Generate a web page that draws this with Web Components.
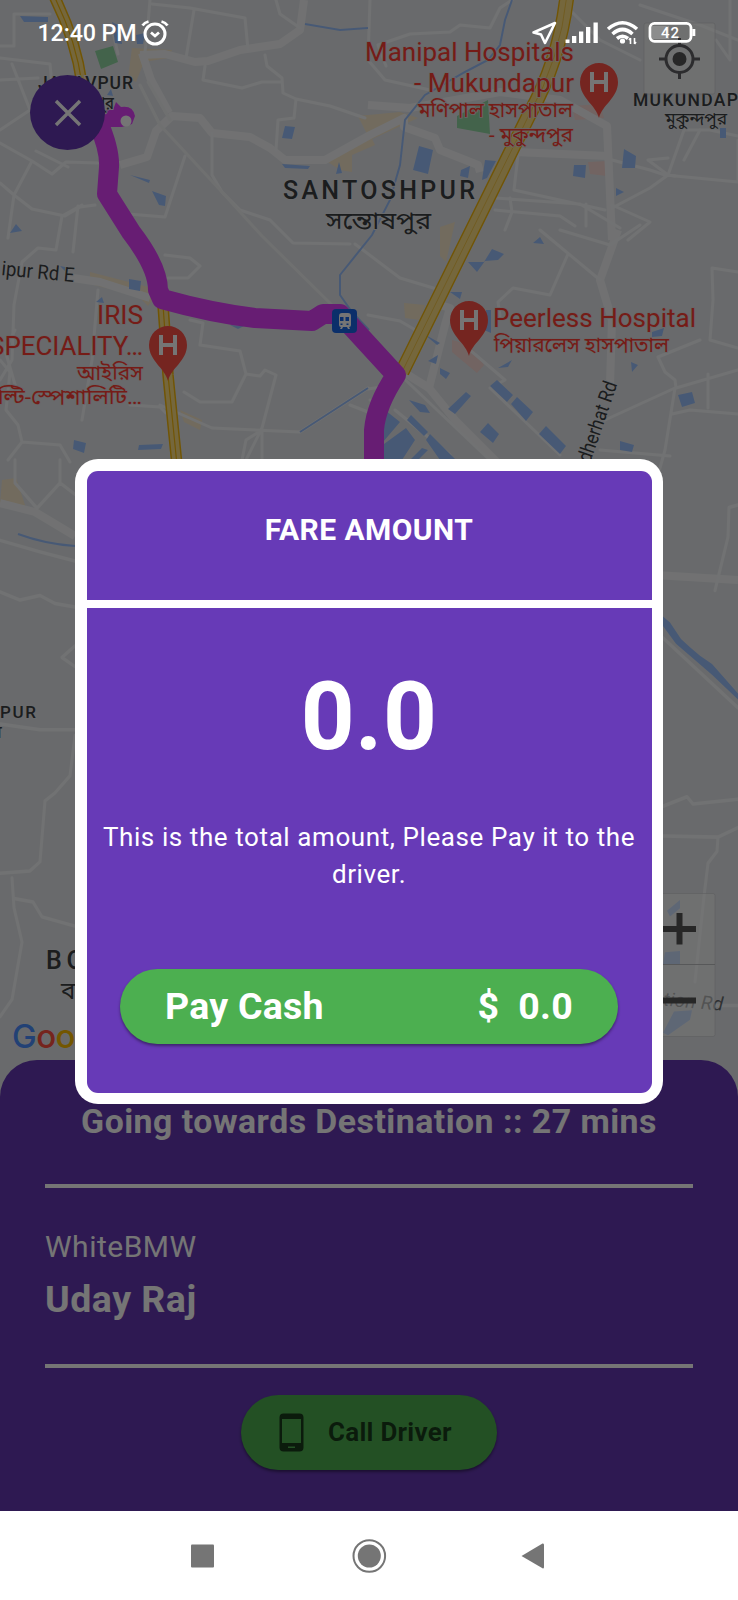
<!DOCTYPE html>
<html lang="en">
<head>
<meta charset="utf-8">
<title>Ride fare</title>
<style>
html,body{margin:0;padding:0}
body{width:738px;height:1600px;overflow:hidden;font-family:Roboto,"Noto Sans",sans-serif;background:#fff}
</style>
</head>
<body>
<ride-screen></ride-screen>
<script>
const define=(name,html)=>customElements.define(name,class extends HTMLElement{
  constructor(){super();this.attachShadow({mode:'open'}).innerHTML=html;}
});

define('city-map',`
<style>
:host{display:block;width:738px;height:1110px;overflow:hidden}
svg{display:block}
text{font-family:Roboto,"Noto Sans Bengali","Noto Sans",sans-serif}
.r{fill:none;stroke:#f7f8fa;stroke-width:3;stroke-linejoin:round;stroke-linecap:round}
.m{fill:none;stroke:#f6f7f9;stroke-width:8;stroke-linejoin:round}
.w{fill:#9cc2ff}
.wl{fill:none;stroke:#9cc2ff;stroke-width:2}
.hl{fill:#ff3d33;stroke:#e3dfe1;stroke-width:1.6;paint-order:stroke;font-weight:400}
.pl{fill:#3c4043;stroke:#e8eaed;stroke-width:2;paint-order:stroke;font-weight:500}
</style>
<svg width="738" height="1110" viewBox="0 0 738 1110">
<defs><g id="pin"><path d="M0 36C-3 23-19 16-19 0A19 19 0 0 1 19 0C19 16 3 23 0 36Z" fill="#ff5247"/><path d="M-7-10V10M7-10V10M-7 0H7" stroke="#fff" stroke-width="4" fill="none"/></g></defs>
<rect width="738" height="1110" fill="#e5e8eb"/>
<g fill="#f8e9cc">
<path d="M132 48L172 50 168 58 144 62 136 82 128 78Z"/><path d="M358 116L400 112 418 118 370 140Z"/><path d="M325 160L370 135 375 145 352 155 352 172 340 170Z"/><path d="M90 272L160 290 148 306 138 296 90 284Z"/><path d="M180 410L202 420 200 430 184 422Z"/><path d="M404 303L425 305 420 320 405 318Z"/><path d="M440 227L455 222 446 262 440 256Z"/><path d="M2 480L16 478 26 508 0 504Z"/>
</g>
<g fill="#f8d9d5"><path d="M572 106L600 104 604 118 575 120Z"/><path d="M588 162L608 161 607 176 590 174Z"/><path d="M452 340L470 345 484 365 477 373 452 352Z"/></g>
<g class="m">
<path d="M142 53L151 80 169 113"/><path d="M140 55L165 54 195 62 208 61 240 50 280 44 300 30 304 0"/><path d="M120 165L147 157 156 131 172 116 200 118 212 133 250 137 270 148 285 160 325 160 370 135 404 118 404 127 435 138 440 150 478 165 480 172"/><path d="M515 152L608 156"/>
<path d="M368 105L410 108 500 92 560 100 607 126 612 240"/><path d="M430 302L450 308 445 325 429 388 455 420 500 465"/><path d="M618 230L600 280 612 320 610 385"/><path d="M0 503L35 512 75 536"/><path d="M655 575L738 580"/><path d="M400 370L429 388"/><path d="M66 277L100 282 150 298"/>
</g>
<g class="r">
<path d="M0 46H14V14H50M0 58L50 64 52 85M0 130L30 110 12 64M0 80L38 78M0 143L32 161 52 174 66 162 98 163M0 183L14 195 8 238M14 195L32 209 65 216 80 207 95 205M32 161L14 195M36 151L68 167M112 28L118 54"/>
<path d="M150 0L148 24 145 52M152 4L190 8 245 18 248 50M194 10L186 58M276 0L280 14 300 28M265 55L267 66 282 78 283 93 296 99 294 118 278 120 276 150M205 66L203 80 242 88 262 82 282 82M296 99L330 106 365 118"/>
<path d="M212 133L212 175 222 192M185 156L165 217 128 214M82 205L62 216 56 250 38 248 22 262 14 305 12 360 0 380M78 206L73 252M222 192L240 210 270 220 293 243 350 244"/>
<path d="M370 0L368 60 385 80 430 90M386 66L378 45 410 34 450 32 460 25 490 28 500 8 512 0M560 0L600 40 640 60M640 5L700 25 738 40M612 160L650 170 665 175 738 182M612 208L650 188 668 175 684 130 710 130 738 136M730 0V60L716 40"/>
<path d="M518 155L514 190 605 210M495 198L580 204 620 228M495 210L560 216 575 226M510 198L512 212 505 230M586 204V226M612 205L650 222 628 240M675 176L668 175 648 160 668 158M684 160L700 130M738 140V180"/>
<path d="M355 244L400 278 440 290M368 315L400 321 424 335M540 230L600 280M568 254L550 295 513 288 498 302 500 316M560 230L610 245 640 225M713 300L710 340 738 348M713 300L712 268 738 272M658 357L700 340M658 357L665 372 675 380 676 388 738 370M605 420L675 388 665 450 658 475M672 414L690 410 738 414M708 374L708 408"/>
<path d="M470 350L505 380 490 388 560 455M368 389L395 385M395 410L450 455M600 450L670 456M385 410L370 400M495 465L395 370"/>
<path d="M165 255L190 258 200 266 188 278 168 278M98 290L92 360 82 420M190 320L203 323 200 345 240 351 246 374 260 376 265 370 276 375 262 428 246 460M246 374L232 402 200 402 184 392M160 405L212 428 300 432 368 388M262 430L262 460M262 430L246 440 242 460M0 360L10 372 6 410 18 425 22 442 60 445 70 462M22 442L8 460M130 405L160 407 166 413M350 405L368 412M18 395L5 350 15 330"/>
<path d="M140 85L160 125 222 192 262 236 335 308" stroke="#f2f3f4"/><path d="M148 82L170 120" stroke="#f2f3f4"/>
<path transform="translate(0 -68.100) scale(1 1.148)" d="M15 460L15 480 37 502 60 480 60 460M60 480L75 490M0 530L40 540 75 548M0 575L20 582 40 578 55 585 75 588M75 622L62 632 75 640M0 690L40 695 75 695M75 700L70 735 55 750 45 757 40 810 30 818 0 820M12 824L14 850 22 880 12 930 0 945M14 842L33 845 42 858 75 866"/>
<path transform="translate(0 -85.600) scale(1 1.186)" d="M663 610L738 669M715 570L728 525 729 500 738 498M663 752L687 744 693 750 738 746M663 777L718 778 738 770M718 778L717 790 708 800 704 828 695 900M715 920H738"/>
</g>
<g class="w">
<path d="M20 16L48 17 48 22 24 22Z"/><path d="M112 22L120 26 122 44 115 43ZM136 35L145 33 143 44 137 44Z"/><path d="M285 126L295 127 292 139 282 138Z"/><path d="M282 164L310 166 308 169 285 168ZM336 174L339 162 342 173Z"/><path d="M130 175L150 180 149 183ZM152 191L166 196 165 206 159 205ZM10 233L16 224 22 231Z"/>
<path d="M419 146L433 150 428 174 413 170ZM461 170L470 166 468 178 460 176ZM485 160L496 161 487 178 482 180Z"/><path d="M624 149L636 156 635 168 622 168ZM574 165L586 165 585 178 573 176ZM616 188L624 192 616 196ZM720 128H726V138H720Z"/>
<path d="M468 262L484 262 492 249 504 254 498 260 485 261 477 272ZM533 243L540 237 544 244ZM450 292L462 292 460 299ZM424 334L440 343 437 345ZM428 361L438 355 436 364ZM498 368L512 360 508 367ZM652 332L664 328 662 336 652 337ZM631 362L638 365 632 372ZM486 310L491 310 491 333 484 330Z"/>
<path d="M497 380L513 395 507 402 490 386ZM517 397L533 412 526 421 511 404ZM466 392L471 396 455 414 448 409ZM440 368L450 373 446 379 440 374ZM488 423L499 434 493 443 480 432ZM546 426L566 446 560 454 539 434ZM678 395L692 392 695 403 682 407ZM620 441L634 445 632 452 620 450ZM409 400L425 405 430 413 420 412Z"/>
<path d="M385 410L400 422 383 442ZM384 444L406 428 415 440 402 460 382 460ZM411 415L428 432 424 436 407 420ZM430 434L456 460H440L426 440ZM410 460L422 448 428 450 418 460Z"/>
<path d="M129 279L141 281 140 291 129 289ZM74 440L86 443 84 453 73 449ZM139 445L163 444 161 449 138 450ZM60 266L70 268 66 272ZM96 302L102 297 104 303ZM107 95L111 89 113 96ZM230 325L244 326 238 329Z"/>
<path transform="translate(0 -85.600) scale(1 1.186)" d="M663 592L670 597 681 611 690 618 700 625 712 632 738 657V662L712 641 690 625 676 615 663 600ZM680 831L667 840 670 845 680 838ZM665 875L680 874V885H663ZM663 943L674 925 692 924 690 932 668 945Z"/>
</g>
<g class="wl"><path d="M512 0L505 20 500 45 488 60 465 72 425 95 405 120 400 165 390 200 372 235 340 275V295L352 312 369 330M300 432L368 388M305 24L340 30 368 28" /><path d="M18 534Q45 544 75 546"/></g>
<path d="M95 51L113 46 118 62 101 69Z" fill="#93d8a4"/><path d="M457 116L488 100 490 134 457 128Z" fill="#93d8a4"/>
<g fill="none"><path d="M54-4Q76 40 82 84M163 305L168 375 177 465" stroke="#f6b90c" stroke-width="11.500"/><path d="M54-4Q76 40 82 84M163 305L168 375 177 465" stroke="#ffe084" stroke-width="8.500"/><path d="M54-4Q76 40 82 84M163 305L168 375 177 465" stroke="#f6b90c" stroke-width="1.200"/>
<path d="M567-5Q560 60 529 115L402 372" stroke="#f6b90c" stroke-width="15"/><path d="M567-5Q560 60 529 115L402 372" stroke="#ffe084" stroke-width="12.200"/><path d="M567-5Q560 60 529 115L402 372" stroke="#f6c94a" stroke-width="1"/></g>
<path d="M98 122Q110 150 109 167L107 194 131 232Q158 267 158 290L162 299Q212 313 255 318L312 321 323 314H340L396 375Q376 405 374 430V475" fill="none" stroke="#e040fb" stroke-width="20" stroke-linejoin="round"/>
<path d="M100 110L113 110 116 102 121 107Q133 105 135 116L132 124 122 127H104Z" fill="#e040fb"/><circle cx="126" cy="121" r="5.500" fill="#fff"/>
<g transform="translate(332 309)"><rect width="25" height="24" rx="4" fill="#1968e8"/><path d="M9 4h7q3 0 3 3v9q0 2-2 2l1 2h-2l-1-2h-4l-1 2h-2l1-2q-2 0-2-2V7q0-3 3-3Z" fill="#fff"/><path d="M8 8h3.500v4H8zM13.500 8H17v4h-3.500zM8.500 14.500h2v1.500h-2zM14.500 14.500h2v1.500h-2z" fill="#1968e8"/></g>
<use href="#pin" x="599" y="82"/><use href="#pin" x="168" y="345"/><use href="#pin" x="469" y="320"/>
<g class="hl" font-size="25">
<text x="365" y="61" textLength="209" lengthAdjust="spacingAndGlyphs">Manipal Hospitals</text><text x="414" y="92" textLength="160" lengthAdjust="spacingAndGlyphs">- Mukundapur</text>
<text x="418" y="117" font-size="20" textLength="155" lengthAdjust="spacingAndGlyphs">মণিপাল হাসপাতাল</text><text x="489" y="142" font-size="20" textLength="84" lengthAdjust="spacingAndGlyphs">- মুকুন্দপুর</text>
<text x="97" y="324" textLength="46" lengthAdjust="spacingAndGlyphs">IRIS</text><text x="-11" y="355" textLength="154" lengthAdjust="spacingAndGlyphs">SPECIALITY…</text>
<text x="77" y="380" font-size="20" textLength="66" lengthAdjust="spacingAndGlyphs">আইরিস</text><text x="-22" y="404" font-size="20" textLength="164" lengthAdjust="spacingAndGlyphs">মাল্টি-স্পেশালিটি…</text>
<text x="493" y="327" textLength="203" lengthAdjust="spacingAndGlyphs">Peerless Hospital</text><text x="494" y="352" font-size="20" textLength="175" lengthAdjust="spacingAndGlyphs">পিয়ারলেস হাসপাতাল</text>
</g>
<g class="pl">
<text x="283" y="198.500" font-size="25" textLength="192">SANTOSHPUR</text><text x="326" y="229" font-size="24" font-weight="400" textLength="105" lengthAdjust="spacingAndGlyphs">সন্তোষপুর</text>
<text x="633" y="105.500" font-size="17.500" textLength="130">MUKUNDAPUR</text><text x="665" y="125" font-size="17" font-weight="400" textLength="62" lengthAdjust="spacingAndGlyphs">মুকুন্দপুর</text>
<text x="38" y="89" font-size="17.500" textLength="95">JADAVPUR</text><text x="64" y="109" font-size="18" textLength="50" lengthAdjust="spacingAndGlyphs">যাদবপুর</text>
<text x="1" y="275" font-size="20" font-weight="400" textLength="73" lengthAdjust="spacingAndGlyphs" transform="rotate(5.500 1 275)">ipur Rd E</text>
<text x="582" y="487" font-size="20" font-weight="400" textLength="109" lengthAdjust="spacingAndGlyphs" transform="rotate(-71 582 487)">Mudherhat Rd</text>
<text x="0" y="718" font-size="17" textLength="36">PUR</text><text x="-9" y="738" font-size="18">র</text>
<text x="46" y="969" font-size="25" textLength="98">BORAL</text><text x="61" y="999" font-size="24" font-weight="400">বড়াল</text>
</g>
<text x="635" y="1003" font-size="19" fill="#3c4043" fill-opacity=".75" font-style="italic" textLength="88" transform="rotate(5 635 1003)">Station Rd</text>
<text x="12" y="1047.500" style="font-family:Inter,sans-serif;font-size:33px;font-weight:500" letter-spacing="-.500"><tspan fill="#4a8fff">G</tspan><tspan fill="#ff5040">o</tspan><tspan fill="#fbbc04">o</tspan><tspan fill="#4285f4">g</tspan><tspan fill="#34a853">l</tspan><tspan fill="#ea4335">e</tspan></text>
<g stroke="#b8babd" stroke-opacity=".4" fill="#fff" fill-opacity=".5"><rect x="644" y="23" width="71" height="71" rx="2"/><rect x="644" y="893.500" width="71" height="143" rx="2"/><path d="M644 964.500H715" stroke-opacity=".9"/></g>
<g stroke="#606164" fill="none"><circle cx="679.500" cy="59" r="13.500" stroke-width="3"/><path d="M679.500 38V46M679.500 72V79M659 59H667M692 59H700" stroke-width="3"/><circle cx="679.500" cy="59" r="7" fill="#555" stroke="none"/><path d="M663 929H696M679.500 913V944.500M663 1000.500H696" stroke="#555" stroke-width="6"/></g>
</svg>`);

define('status-bar',`
<style>
:host{display:flex;align-items:center;height:66px;padding:0 42px 0 37.500px;box-sizing:border-box;color:#fff;justify-content:space-between}
div{display:flex;align-items:center}
.t{font-size:23.300px;font-weight:500;line-height:28px;letter-spacing:-.15px;margin-right:4.500px}
svg{display:block;flex:none}
</style>
<div><span class="t">12:40 PM</span>
<svg width="28" height="26" viewBox="0 0 28 26" fill="none" stroke="#fff"><circle cx="14" cy="14" r="10" stroke-width="3"/><path d="M10 12.500L14 16 18 12.500" stroke-width="2.800"/><path d="M1.500 5.500Q3.500 2.500 7.500 1.500M26.500 5.500Q24.500 2.500 20.500 1.500" stroke-width="2.800"/></svg></div>
<svg width="166" height="28" viewBox="530 19 166 28"><path d="M533.500 32.500L555 23 545 43 541 34.500Z" fill="none" stroke="#fff" stroke-width="2.600" stroke-linejoin="round"/>
<path d="M565.500 39.500H569.500V43H565.500ZM572 36H576.300V43H572ZM579 31.500H583.300V43H579ZM586 27H590.300V43H586ZM593.500 22.500H597.800V43H593.500Z" fill="#fff"/>
<g fill="none" stroke="#fff" stroke-width="3.600"><path d="M608 29Q622.500 16.500 637 29M612.500 34Q622.500 25 632.500 34M617 38.500Q622.500 34 628 38.500"/></g><circle cx="622.500" cy="41" r="2.600" fill="#fff"/><path d="M630.500 38V44M634.500 38V44M629 40L630.500 38M636 42L634.500 44" stroke="#fff" stroke-width="1.600" fill="none"/>
<rect x="652" y="26" width="17" height="13" fill="#aaa" opacity=".5"/><rect x="650" y="23.300" width="41" height="18" rx="4.500" fill="none" stroke="#fff" stroke-width="2.800"/><path d="M693.800 29V36" stroke="#fff" stroke-width="3"/><text x="661" y="37.800" fill="#fff" font-size="15" font-weight="500" textLength="18">42</text></svg>`);

define('close-button',`
<style>
:host{display:flex;align-items:center;justify-content:center;width:75px;height:75px;border-radius:50%;background:#6438b2}
</style>
<svg width="28" height="28" viewBox="0 0 28 28"><path d="M2 2L26 26M26 2L2 26" stroke="#fff" stroke-width="3.400"/></svg>`);

define('pill-button',`
<style>
:host{display:flex;align-items:center;height:75px;border-radius:38px;background:#4caf50;box-sizing:border-box;box-shadow:0 2px 3px #0006}
</style><slot></slot>`);

define('trip-panel',`
<style>
:host{display:flex;flex-direction:column;height:451px;box-sizing:border-box;padding:44px 45px 0;border-radius:37px 37px 0 0;background:#6438b2;color:#fff}
h2{margin:0;text-align:center;font-size:33.800px;line-height:36px;height:80px;font-weight:700;letter-spacing:.48px;white-space:nowrap}
hr{margin:0;border:0;height:4px;background:#fff;flex:none}
p{margin:0}
.car{font-size:30px;line-height:36px;margin-top:41px;font-weight:400;letter-spacing:.5px}
.name{font-size:37.500px;line-height:44px;margin:12px 0 43px;font-weight:700;letter-spacing:.5px}
pill-button{align-self:center;width:256px;margin-top:26.500px;padding-left:38px;flex:none;color:#000000a8;font-size:26px;font-weight:700}
pill-button span{margin-left:24px;letter-spacing:.25px}
svg{display:block}
</style>
<h2>Going towards Destination :: 27 mins</h2><hr>
<p class="car">WhiteBMW</p><p class="name">Uday Raj</p><hr>
<pill-button><svg width="25" height="39" viewBox="0 0 25 39"><path fill-rule="evenodd" fill="#000000a8" d="M4.500.5h16a4 4 0 0 1 4 4v30a4 4 0 0 1-4 4h-16a4 4 0 0 1-4-4v-30a4 4 0 0 1 4-4ZM3 6v24h19V6ZM9 33.500v1.500h7v-1.500Z"/></svg><span>Call Driver</span></pill-button>`);

define('fare-dialog',`
<style>
:host{display:block;box-sizing:border-box;width:588px;height:645px;padding:11.500px;background:#fff;border-radius:23px;color:#fff}
.b{height:622px;display:flex;flex-direction:column;background:#673ab7;border-radius:11px;overflow:hidden}
h1{margin:0;height:129.500px;box-sizing:border-box;padding-top:41px;text-align:center;font-size:30px;line-height:36px;font-weight:700;letter-spacing:.45px}
hr{margin:0;border:0;height:7.500px;background:#fff;flex:none}
.v{text-align:center;font-size:94px;line-height:110px;font-weight:700;margin-top:54px;letter-spacing:.5px}
p{margin:47px 14px 0;text-align:center;font-size:26px;line-height:37.500px;letter-spacing:.59px}
pill-button{margin:75px 33.500px 0;padding:0 45px;justify-content:space-between;font-size:37.500px;font-weight:700;white-space:pre;letter-spacing:.25px}
</style>
<div class="b"><h1><slot name="title"></slot></h1><hr><div class="v"><slot name="amount"></slot></div><p><slot></slot></p>
<pill-button><span>Pay Cash</span><span>$  0.0</span></pill-button></div>`);

define('nav-bar',`
<style>:host{display:flex;height:89px;background:#fff;align-items:center;justify-content:center}svg{display:block}</style>
<svg width="360" height="36" viewBox="189 1538 360 36" fill="#757575"><rect x="191" y="1544.500" width="23" height="23" rx="1"/><circle cx="369.300" cy="1556" r="15.800" fill="none" stroke="#757575" stroke-width="2"/><circle cx="369.300" cy="1556" r="11.500"/><path d="M521.500 1556L542.500 1543.500Q544 1543 544 1545V1567Q544 1569 542.500 1568.200Z"/></svg>`);

define('ride-screen',`
<style>
:host{display:flex;flex-direction:column;position:relative;width:738px;height:1600px;overflow:hidden}
.map{height:1060px;flex:none}
city-map{position:absolute;left:0;top:0}
trip-panel{position:relative}
close-button{position:absolute;left:30px;top:75px}
.scrim{position:absolute;inset:0 0 89px;background:#0000008a}
status-bar{position:absolute;left:0;top:0;width:100%}
fare-dialog{position:absolute;left:75px;top:459px}
</style>
<div class="map"><city-map></city-map><close-button></close-button></div>
<trip-panel></trip-panel><nav-bar></nav-bar>
<div class="scrim"></div><status-bar></status-bar>
<fare-dialog><span slot="title">FARE AMOUNT</span><span slot="amount">0.0</span>This is the total amount, Please Pay it to the driver.</fare-dialog>`);
</script>
</body>
</html>
